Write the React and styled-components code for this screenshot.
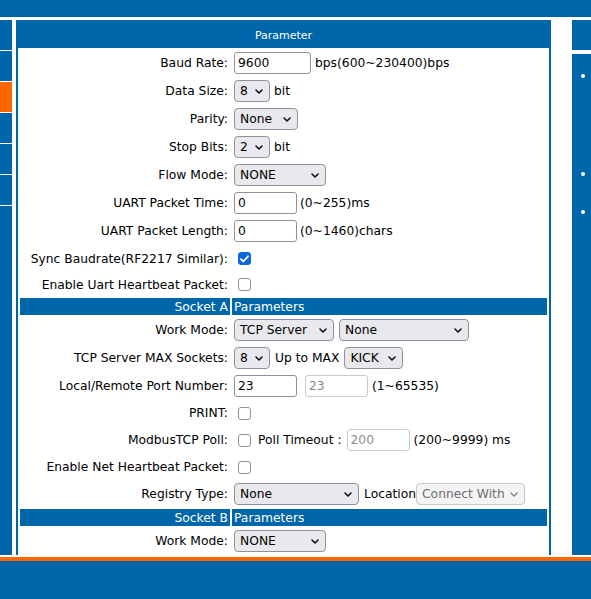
import React from 'react';
import styled, { createGlobalStyle } from 'styled-components';

const BLUE = '#0066aa';
const ORANGE = '#ff6600';
const FONT = "'DejaVu Sans', Verdana, sans-serif";

const GlobalStyle = createGlobalStyle`
  html, body { margin: 0; padding: 0; background: #fff; overflow: hidden; }
  body { font-family: ${FONT}; font-size: 12.3px; color: #000; }
`;

const Page = styled.div`
  width: 591px;
  height: 599px;
  display: flex;
  flex-direction: column;
  background: #fff;
  overflow: hidden;
`;
const TopBar = styled.div`
  height: 17px;
  flex: none;
  background: ${BLUE};
`;
const Middle = styled.div`
  display: flex;
  height: 535px;
  margin-top: 3px;
  flex: none;
  overflow: hidden;
`;
const Nav = styled.div`
  width: 12px;
  flex: none;
  display: flex;
  flex-direction: column;
  gap: 1px;
`;
const NavItem = styled.div`
  height: 30px;
  flex: ${p => (p.$fill ? 1 : 'none')};
  background: ${p => (p.$active ? ORANGE : BLUE)};
`;
const Panel = styled.div`
  width: 535px;
  margin-left: 4px;
  flex: none;
  display: flex;
  flex-direction: column;
`;
const PanelHeader = styled.div`
  height: 28px;
  flex: none;
  box-sizing: border-box;
  padding-top: 3px;
  background: ${BLUE};
  color: #fff;
  font-size: 11px;
  display: flex;
  align-items: center;
  justify-content: center;
`;
const PanelBody = styled.div`
  flex: 1;
  border-left: 2px solid ${BLUE};
  border-right: 2px solid ${BLUE};
  padding: 2px;
  display: flex;
  flex-direction: column;
  gap: 2px;
  overflow: hidden;
`;
const Row = styled.div`
  display: grid;
  grid-template-columns: 210px 1fr;
  column-gap: 2px;
  height: ${p => p.$h || 26}px;
  flex: none;
`;
const Label = styled.div`
  padding: 0 2px;
  display: flex;
  align-items: center;
  justify-content: flex-end;
  white-space: nowrap;
`;
const Value = styled.div`
  padding: 0 2px;
  display: flex;
  align-items: center;
  white-space: nowrap;
`;
const BarCell = styled.div`
  background: ${BLUE};
  color: #fff;
  padding: 0 2px;
  display: flex;
  align-items: center;
  justify-content: ${p => (p.$right ? 'flex-end' : 'flex-start')};
  white-space: nowrap;
`;
const Input = styled.input`
  width: ${p => p.$w}px;
  height: 22px;
  box-sizing: border-box;
  margin: 0 0 0 ${p => p.$ml || 0}px;
  padding: 0 3px;
  border: 1px solid ${p => (p.disabled ? '#c8c8cf' : '#8f8f9d')};
  border-radius: 3px;
  background: #fff;
  color: ${p => (p.disabled ? '#8a8a8a' : '#000')};
  font-family: ${FONT};
  font-size: 12.3px;
  outline: none;
  flex: none;
`;
const SelectBox = styled.div`
  width: ${p => p.$w}px;
  height: 22px;
  box-sizing: border-box;
  margin-left: ${p => p.$ml || 0}px;
  padding: 0 6px 0 5px;
  border: 1px solid ${p => (p.$disabled ? '#c8c8cf' : '#8f8f9d')};
  border-radius: 4px;
  background: ${p => (p.$disabled ? '#f4f4f6' : '#e9e9ed')};
  color: ${p => (p.$disabled ? '#6f6f6f' : '#000')};
  display: flex;
  align-items: center;
  justify-content: space-between;
  gap: 4px;
  flex: none;
  overflow: hidden;
`;
const Check = styled.span`
  width: 13px;
  height: 13px;
  box-sizing: border-box;
  margin-left: 4px;
  border-radius: 3px;
  border: 1px solid ${p => (p.$on ? '#0b67df' : '#8f8f9d')};
  background: ${p => (p.$on ? '#0b67df' : '#fff')};
  display: flex;
  align-items: center;
  justify-content: center;
  flex: none;
`;
const Note = styled.span`
  margin-left: ${p => p.$ml || 0}px;
`;
const Side = styled.div`
  flex: 1;
  margin-left: 21px;
  display: flex;
  flex-direction: column;
  gap: 4px;
`;
const SideHead = styled.div`
  height: 30px;
  flex: none;
  background: ${BLUE};
`;
const SideBody = styled.div`
  flex: 1;
  background: ${BLUE};
  display: flex;
  flex-direction: column;
  align-items: flex-start;
  padding-left: 9px;
`;
const Dot = styled.span`
  width: 4px;
  height: 4px;
  border-radius: 50%;
  background: #fff;
  margin-top: ${p => p.$mt}px;
  flex: none;
`;
const Gap = styled.div`
  height: 2px;
  flex: none;
`;
const OrangeLine = styled.div`
  height: 4px;
  flex: none;
  background: ${ORANGE};
`;
const Footer = styled.div`
  flex: 1;
  background: ${BLUE};
`;

const Chevron = ({ color }) => (
  <svg width="8" height="5" viewBox="0 0 8 5" style={{ flex: 'none' }}>
    <path d="M1 1 L4 4 L7 1" fill="none" stroke={color} strokeWidth="1.6" strokeLinecap="round" strokeLinejoin="round" />
  </svg>
);

const Select = ({ w, ml, disabled, children }) => (
  <SelectBox $w={w} $ml={ml} $disabled={disabled}>
    <span>{children}</span>
    <Chevron color={disabled ? '#8a8a8a' : '#111'} />
  </SelectBox>
);

const Checkbox = ({ on }) => (
  <Check $on={on}>
    {on && (
      <svg width="9" height="8" viewBox="0 0 9 8">
        <path d="M1 4.2 L3.4 6.5 L8 1.3" fill="none" stroke="#fff" strokeWidth="1.8" strokeLinecap="round" strokeLinejoin="round" />
      </svg>
    )}
  </Check>
);

const Field = ({ label, h, children }) => (
  <Row $h={h}>
    <Label>{label}</Label>
    <Value>{children}</Value>
  </Row>
);

const Bar = ({ left, right }) => (
  <Row $h={17}>
    <BarCell $right>{left}</BarCell>
    <BarCell>{right}</BarCell>
  </Row>
);

export default function App() {
  return (
    <Page>
      <GlobalStyle />
      <TopBar />
      <Middle>
        <Nav>
          <NavItem />
          <NavItem />
          <NavItem $active />
          <NavItem />
          <NavItem />
          <NavItem />
          <NavItem $fill />
        </Nav>
        <Panel>
          <PanelHeader>Parameter</PanelHeader>
          <PanelBody>
            <Field label="Baud Rate:">
              <Input $w={77} defaultValue="9600" />
              <Note $ml={4}>bps(600~230400)bps</Note>
            </Field>
            <Field label="Data Size:">
              <Select w={36}>8</Select>
              <Note $ml={4}>bit</Note>
            </Field>
            <Field label="Parity:">
              <Select w={64}>None</Select>
            </Field>
            <Field label="Stop Bits:">
              <Select w={36}>2</Select>
              <Note $ml={4}>bit</Note>
            </Field>
            <Field label="Flow Mode:">
              <Select w={92}>NONE</Select>
            </Field>
            <Field label="UART Packet Time:">
              <Input $w={63} defaultValue="0" />
              <Note $ml={3}>(0~255)ms</Note>
            </Field>
            <Field label="UART Packet Length:">
              <Input $w={63} defaultValue="0" />
              <Note $ml={3}>(0~1460)chars</Note>
            </Field>
            <Field label="Sync Baudrate(RF2217 Similar):" h={25}>
              <Checkbox on />
            </Field>
            <Field label="Enable Uart Heartbeat Packet:" h={23}>
              <Checkbox />
            </Field>
            <Bar left="Socket A" right="Parameters" />
            <Field label="Work Mode:">
              <Select w={100}>TCP Server</Select>
              <Select w={130} ml={5}>None</Select>
            </Field>
            <Field label="TCP Server MAX Sockets:">
              <Select w={36}>8</Select>
              <Note $ml={5}>Up to MAX</Note>
              <Select w={59} ml={5}>KICK</Select>
            </Field>
            <Field label="Local/Remote Port Number:">
              <Input $w={63} defaultValue="23" />
              <Input $w={63} $ml={8} defaultValue="23" disabled />
              <Note $ml={4}>(1~65535)</Note>
            </Field>
            <Field label="PRINT:" h={24}>
              <Checkbox />
            </Field>
            <Field label="ModbusTCP Poll:">
              <Checkbox />
              <Note $ml={7}>Poll Timeout :</Note>
              <Input $w={63} $ml={5} defaultValue="200" disabled />
              <Note $ml={4}>(200~9999) ms</Note>
            </Field>
            <Field label="Enable Net Heartbeat Packet:" h={24}>
              <Checkbox />
            </Field>
            <Field label="Registry Type:">
              <Select w={125}>None</Select>
              <Note $ml={5}>Location</Note>
              <Select w={109} disabled>Connect With</Select>
            </Field>
            <Bar left="Socket B" right="Parameters" />
            <Field label="Work Mode:">
              <Select w={92}>NONE</Select>
            </Field>
          </PanelBody>
        </Panel>
        <Side>
          <SideHead />
          <SideBody>
            <Dot $mt={20} />
            <Dot $mt={94} />
            <Dot $mt={34} />
          </SideBody>
        </Side>
      </Middle>
      <Gap />
      <OrangeLine />
      <Footer />
    </Page>
  );
}
